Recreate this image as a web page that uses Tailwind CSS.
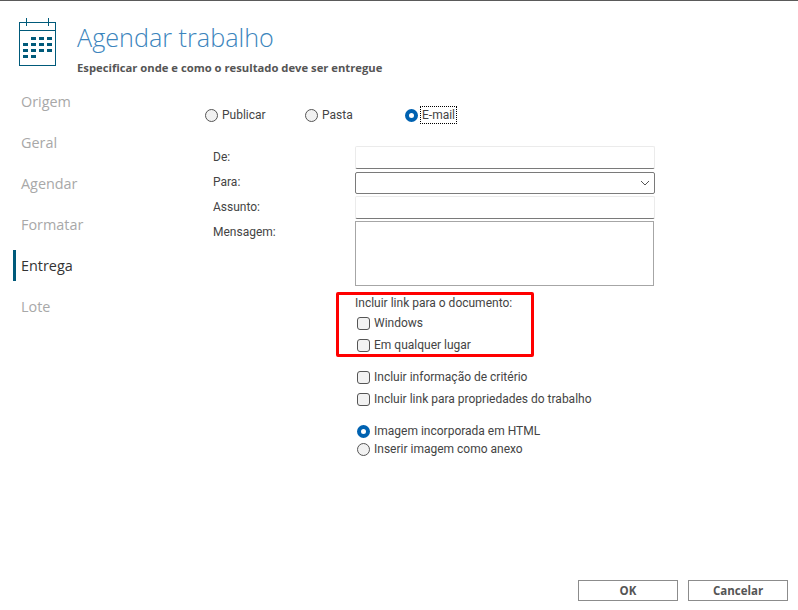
<!DOCTYPE html>
<html lang="pt">
<head>
<meta charset="utf-8">
<script src="https://cdn.jsdelivr.net/npm/@tailwindcss/browser@4"></script>
</head>
<body class="bg-white">
<div class="w-[798px] h-[610px] flex flex-col border-t border-[#5a5a5a] overflow-hidden bg-white font-['Roboto',sans-serif] text-[#444] text-[12px]">
  <header class="h-[80px] shrink-0 flex pl-[19px] pt-[17px]">
    <svg class="w-[37px] h-[48px] shrink-0" viewBox="0 0 37 48" fill="none">
      <rect x="0.5" y="4.5" width="36" height="43" stroke="#005a7a"/>
      <path d="M0.5 12.5H36.5M7.5 0V8M29.5 0V8" stroke="#005a7a"/>
      <path fill="#005a7a" d="M12 19h5v3h-5zM20 19h5v3h-5zM28 19h5v3h-5zM4 25h5v3H4zM12 25h5v3h-5zM20 25h5v3h-5zM28 25h5v3h-5zM4 31h5v3H4zM12 31h5v3h-5zM20 31h5v3h-5zM28 31h5v3h-5zM4 37h5v3H4zM12 37h5v3h-5z"/>
    </svg>
    <div class="ml-[21px]">
      <h1 class="font-['Open_Sans',sans-serif] text-[25.2px] leading-[36px] font-light text-[#3c85bd] mt-[1px]">Agendar trabalho</h1>
      <p class="font-['Open_Sans',sans-serif] text-[11.25px] leading-[16px] font-bold text-[#555] mt-[5px]">Especificar onde e como o resultado deve ser entregue</p>
    </div>
  </header>
  <div class="flex flex-1 min-h-0">
    <nav class="w-[205px] shrink-0 pl-[13px] font-['Open_Sans',sans-serif] text-[14.4px] text-[#a8a8a8]">
      <div class="h-[41px] flex items-center gap-[5px]"><span class="w-[3px] h-[31px]"></span>Origem</div>
      <div class="h-[41px] flex items-center gap-[5px]"><span class="w-[3px] h-[31px]"></span>Geral</div>
      <div class="h-[41px] flex items-center gap-[5px]"><span class="w-[3px] h-[31px]"></span>Agendar</div>
      <div class="h-[41px] flex items-center gap-[5px]"><span class="w-[3px] h-[31px]"></span>Formatar</div>
      <div class="h-[41px] flex items-center gap-[5px] text-[#333]"><span class="w-[3px] h-[31px] bg-[#005a7a]"></span>Entrega</div>
      <div class="h-[41px] flex items-center gap-[5px]"><span class="w-[3px] h-[31px]"></span>Lote</div>
    </nav>
    <main class="flex-1 flex flex-col">
      <div class="mt-[24px] h-[20px] flex items-center">
        <label class="w-[100px] flex items-center gap-[4px]"><span class="w-[13px] h-[13px] rounded-full border border-[#555] bg-[#f2f2f2]"></span>Publicar</label>
        <label class="w-[100px] flex items-center gap-[4px]"><span class="w-[13px] h-[13px] rounded-full border border-[#555] bg-[#f2f2f2]"></span>Pasta</label>
        <label class="flex items-center gap-[3px]"><span class="w-[13px] h-[13px] rounded-full border-[4px] border-[#0062b1] bg-white"></span><span class="outline-1 outline-dotted outline-black leading-[16px] px-px">E-mail</span></label>
      </div>
      <div class="mt-[21px] flex flex-col">
        <div class="flex h-[23px] items-center"><span class="w-[150px] pl-[8px] pb-[2px]">De:</span><div class="w-[300px] h-[23px] bg-white rounded-[2px] border border-[#ebebeb] border-b-[#7a7a7a]"></div></div>
        <div class="flex h-[22px] items-center mt-[3px]"><span class="w-[150px] pl-[8px] pb-[2px]">Para:</span><div class="w-[300px] h-[22px] bg-white rounded-[2px] border border-[#7a7a7a] flex items-center justify-end pr-[4px]"><svg class="w-[10px] h-[6px]" viewBox="0 0 10 6" fill="none"><path d="M1 1l4 4 4-4" stroke="#555"/></svg></div></div>
        <div class="flex h-[23px] items-center mt-[2px]"><span class="w-[150px] pl-[8px] pb-[2px]">Assunto:</span><div class="w-[300px] h-[23px] bg-white rounded-[2px] border border-[#ebebeb] border-b-[#7a7a7a]"></div></div>
        <div class="flex h-[65px] items-start mt-[2px]"><span class="w-[150px] pl-[8px] leading-[22px]">Mensagem:</span><div class="w-[299px] h-[65px] bg-white border border-[#a6a6a6]"></div></div>
      </div>
      <div class="ml-[131px] mt-[6px] w-[198px] h-[65px] border-[3px] border-[#f00] rounded-[2px] pl-[16px]">
        <p class="leading-[17px]">Incluir link para o documento:</p>
        <label class="flex items-center gap-[4px] h-[22px] pl-[2px]"><span class="w-[13px] h-[13px] rounded-[3px] border border-[#555] bg-[#f2f2f2]"></span>Windows</label>
        <label class="flex items-center gap-[4px] h-[22px] pl-[2px]"><span class="w-[13px] h-[13px] rounded-[3px] border border-[#555] bg-[#f2f2f2]"></span>Em qualquer lugar</label>
      </div>
      <div class="ml-[152px] mt-[9px]">
        <label class="flex items-center gap-[4px] h-[22px]"><span class="w-[13px] h-[13px] rounded-[3px] border border-[#555] bg-[#f2f2f2]"></span>Incluir informação de critério</label>
        <label class="flex items-center gap-[4px] h-[22px]"><span class="w-[13px] h-[13px] rounded-[3px] border border-[#555] bg-[#f2f2f2]"></span>Incluir link para propriedades do trabalho</label>
      </div>
      <div class="ml-[152px] mt-[12px]">
        <label class="flex items-center gap-[4px] h-[18px]"><span class="w-[13px] h-[13px] rounded-full border-[4px] border-[#0062b1] bg-white"></span>Imagem incorporada em HTML</label>
        <label class="flex items-center gap-[4px] h-[18px]"><span class="w-[13px] h-[13px] rounded-full border border-[#555] bg-[#f2f2f2]"></span>Inserir imagem como anexo</label>
      </div>
      <div class="mt-auto mb-[9px] mr-[10px] flex justify-end gap-[10px]">
        <button class="w-[100px] h-[21px] border border-[#8c8c8c] bg-white text-[11.5px] font-bold text-[#555] font-['Open_Sans',sans-serif]">OK</button>
        <button class="w-[100px] h-[21px] border border-[#8c8c8c] bg-white text-[11.5px] font-bold text-[#555] font-['Open_Sans',sans-serif]">Cancelar</button>
      </div>
    </main>
  </div>
</div>
</body>
</html>
